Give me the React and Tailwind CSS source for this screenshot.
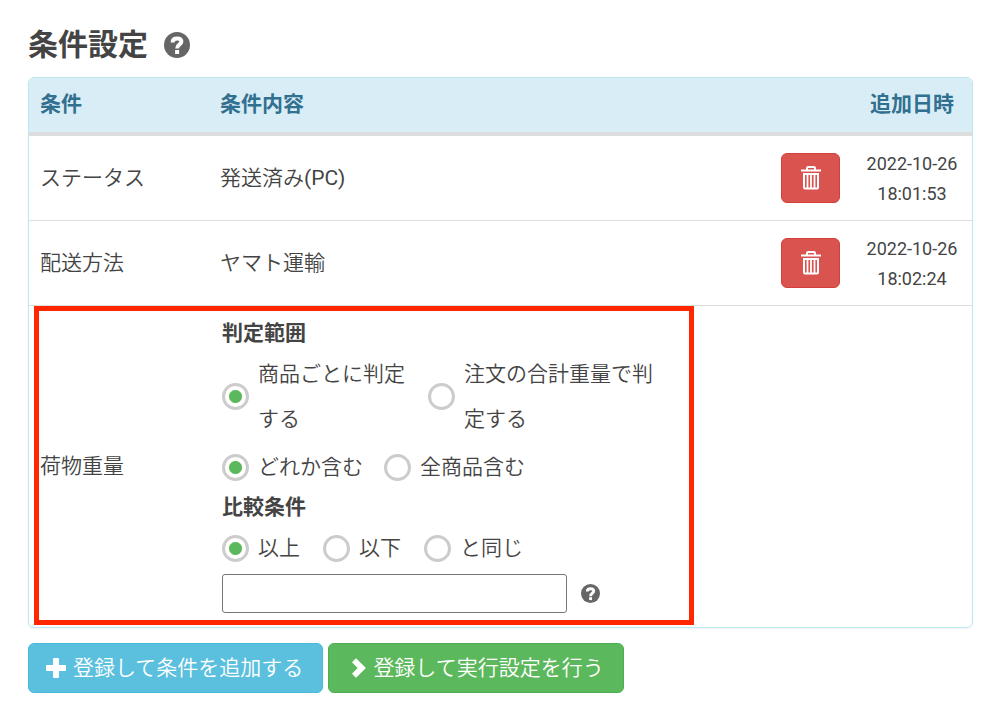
import { useState } from 'react'

const records = [
    { name: 'ステータス', content: '発送済み', suffix: '(PC)', date: '2022-10-26', time: '18:01:53' },
    { name: '配送方法', content: 'ヤマト運輸', date: '2022-10-26', time: '18:02:24' },
]

function QuestionIcon({ className }) {
    return (
        <svg viewBox="0 0 26 26" className={className} aria-hidden="true">
            <circle cx="13" cy="13" r="13" fill="#666" />
            <path
                d="M8.6 10.4C8.6 7.4 10 6.4 13 6.4C16 6.4 17.4 7.6 17.4 9.6C17.4 12.6 13.1 12.4 13.1 16.6"
                fill="none"
                stroke="#fff"
                strokeWidth="4"
            />
            <path d="M11.1 18h4v4h-4z" fill="#fff" />
        </svg>
    )
}

function TrashIcon() {
    return (
        <svg viewBox="0 0 20 24" className="h-6 w-5" fill="none" stroke="#fff" aria-hidden="true">
            <path d="M6 4V2.2Q6 1 7.2 1H12.8Q14 1 14 2.2V4" strokeWidth="2" />
            <path d="M0 4.5H20" strokeWidth="2" />
            <path d="M3 7V21.5Q3 22.5 4 22.5H16Q17 22.5 17 21.5V7M2 8H18" strokeWidth="2" />
            <path d="M6.5 8V22M10 8V22M13.5 8V22" strokeWidth="1.8" />
        </svg>
    )
}

function PlusIcon() {
    return (
        <svg viewBox="0 0 21 20" className="h-5 w-[21px]" fill="#fff" aria-hidden="true">
            <path d="M8 0h4a1 1 0 0 1 1 1v6h6a1 1 0 0 1 1 1v4a1 1 0 0 1-1 1h-6v6a1 1 0 0 1-1 1H8a1 1 0 0 1-1-1v-6H1a1 1 0 0 1-1-1V8a1 1 0 0 1 1-1h6V1a1 1 0 0 1 1-1z" />
        </svg>
    )
}

function ChevronIcon() {
    return (
        <svg viewBox="0 0 21 20" className="h-5 w-[21px]" fill="#fff" aria-hidden="true">
            <path d="M6 4.2L9.4 .8Q10 .2 10.6 .8L19.4 9.4Q20 10 19.4 10.6L10.6 19.2Q10 19.8 9.4 19.2L6 15.8L11.6 10z" />
        </svg>
    )
}

function Radio({ name, label, checked, onChange, textClass = '' }) {
    return (
        <label className="flex items-center gap-[9px] leading-[45px] cursor-pointer">
            <input
                type="radio"
                name={name}
                checked={checked}
                onChange={onChange}
                className="appearance-none shrink-0 size-[27px] rounded-full border-3 border-[#ccc] bg-white bg-[radial-gradient(circle,#5cb85c_6px,transparent_7px)] not-checked:bg-none"
            />
            <span className={textClass}>{label}</span>
        </label>
    )
}

function RadioRow({ name, options, className = '' }) {
    const [value, setValue] = useState(0)
    return (
        <div className={`flex ${className}`}>
            {options.map((option, i) => (
                <Radio
                    key={option.label}
                    name={name}
                    label={option.label}
                    textClass={option.textClass}
                    checked={value === i}
                    onChange={() => setValue(i)}
                />
            ))}
        </div>
    )
}

export default function App() {
    const [weight, setWeight] = useState('')

    return (
        <main className="pt-6 pb-5 pl-7 pr-[30px] bg-white text-[#444] text-[21px] leading-[30px] font-[350] font-[Roboto,'Noto_Sans_CJK_JP',sans-serif]">
            <div className="flex items-center gap-4 h-[42px]">
                <h1 className="text-[30px] leading-[42px] font-bold">条件設定</h1>
                <QuestionIcon className="size-[26px]" />
            </div>

            <div className="mt-[11px] border border-[#bce8f1] rounded-md overflow-hidden shadow-xs">
                <table className="w-full table-fixed border-collapse">
                    <colgroup>
                        <col className="w-[179px]" />
                        <col />
                        <col className="w-[83px]" />
                        <col className="w-[120px]" />
                    </colgroup>
                    <thead>
                        <tr className="h-14 bg-[#d9edf7] text-[#31708f] border-b-4 border-[#ddd]">
                            <th className="pl-[11px] pb-[2px] text-left font-bold">条件</th>
                            <th className="pl-3 pb-[2px] text-left font-bold">条件内容</th>
                            <td></td>
                            <th className="pb-[2px] text-center font-bold">追加日時</th>
                        </tr>
                    </thead>
                    <tbody>
                        {records.map((record) => (
                            <tr key={record.name} className="h-[85px] first:h-[86px] border-b border-[#ddd]">
                                <td className="pl-[11px]">{record.name}</td>
                                <td className="pl-3">
                                    {record.content}
                                    {record.suffix && <span className="font-normal">{record.suffix}</span>}
                                </td>
                                <td className="px-3">
                                    <button
                                        aria-label="削除"
                                        className="flex items-center justify-center w-[59px] h-[50px] rounded-md border border-[#d43f3a] bg-[#d9534f] cursor-pointer"
                                    >
                                        <TrashIcon />
                                    </button>
                                </td>
                                <td className="pt-[2px] text-center text-[18px] font-normal">
                                    {record.date}
                                    <br />
                                    {record.time}
                                </td>
                            </tr>
                        ))}
                        <tr className="relative">
                            <td className="pl-[11px]">
                                荷物重量
                                <div className="absolute left-[5px] top-px bottom-[2px] w-[70%] border-5 border-[#ff2600] pointer-events-none" />
                            </td>
                            <td className="pt-3 pb-[14px] pl-[14px]" colSpan={3}>
                                <div className="font-bold">判定範囲</div>
                                <RadioRow
                                    name="range"
                                    className="mt-1 gap-[23px]"
                                    options={[
                                        { label: '商品ごとに判定する', textClass: 'w-[147px]' },
                                        { label: '注文の合計重量で判定する', textClass: 'w-[189px]' },
                                    ]}
                                />
                                <RadioRow
                                    name="include"
                                    className="mt-[3px] gap-[21px]"
                                    options={[{ label: 'どれか含む' }, { label: '全商品含む' }]}
                                />
                                <div className="mt-[2px] font-bold">比較条件</div>
                                <RadioRow
                                    name="compare"
                                    className="mt-1 gap-[23px]"
                                    options={[{ label: '以上' }, { label: '以下' }, { label: 'と同じ' }]}
                                />
                                <div className="flex items-center gap-[14px] mt-[3px]">
                                    <input
                                        type="text"
                                        aria-label="荷物重量"
                                        value={weight}
                                        onChange={(e) => setWeight(e.target.value)}
                                        className="w-[345px] h-[39px] px-2 border border-[#767676] rounded-[3px] bg-white"
                                    />
                                    <QuestionIcon className="size-[19px]" />
                                </div>
                            </td>
                        </tr>
                    </tbody>
                </table>
            </div>

            <div className="flex gap-[5px] mt-[15px] text-white">
                <button className="flex items-center gap-[6px] h-[50px] pl-[17px] pr-[19px] rounded-md border border-[#46b8da] bg-[#5bc0de] cursor-pointer">
                    <PlusIcon />
                    登録して条件を追加する
                </button>
                <button className="flex items-center gap-[6px] h-[50px] pl-[17px] pr-[19px] rounded-md border border-[#4cae4c] bg-[#5cb85c] cursor-pointer">
                    <ChevronIcon />
                    登録して実行設定を行う
                </button>
            </div>
        </main>
    )
}
